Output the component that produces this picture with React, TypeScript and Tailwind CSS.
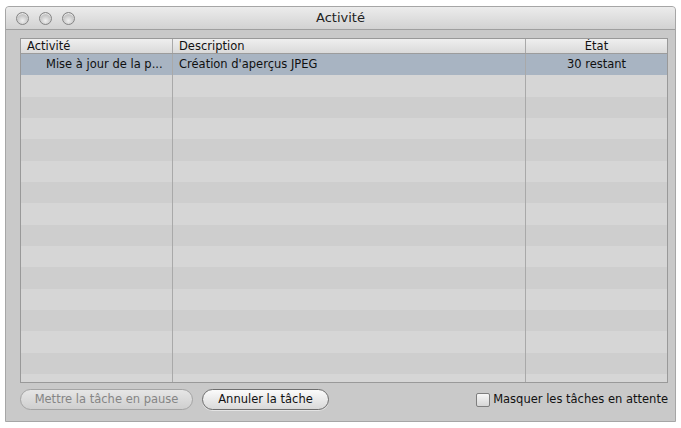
import React from "react";

const font = { fontFamily: '"DejaVu Sans", "Liberation Sans", sans-serif' };

function Light() {
  return (
    <div className="w-[13px] h-[13px] rounded-full border border-[#858585] bg-[radial-gradient(circle_at_50%_70%,#f0f0f0_0%,#c8c8c8_55%,#a2a2a2_100%)] shadow-[inset_0_1px_1px_rgba(255,255,255,0.8)]" />
  );
}

export default function App() {
  const rows = Array.from({ length: 16 }, (_, i) => i);
  return (
    <div className="w-[681px] h-[428px] bg-white pt-[6px] pl-[5px]" style={font}>
      <div className="w-[671px] h-[416px] flex flex-col bg-[#c9c9c9] border border-[#a6a6a6] rounded-t-[4px] overflow-hidden">
        {/* Title bar */}
        <div className="h-[23px] shrink-0 flex items-center relative bg-gradient-to-b from-[#ececec] to-[#d2d2d2] border-b border-[#9f9f9f]">
          <div className="flex gap-[10px] pl-[10px] pt-[1px]">
            <Light />
            <Light />
            <Light />
          </div>
          <div className="absolute inset-0 flex items-center justify-center text-[13px] text-[#222]">
            Activité
          </div>
        </div>
        {/* Content */}
        <div className="flex-1 flex flex-col pl-[14px] pr-[7px] pt-[8px]">
          <div className="h-[345px] border border-[#999] bg-[#d5d5d5] overflow-hidden flex flex-col">
            {/* header */}
            <div className="grid grid-cols-[152px_353px_1fr] h-[15px] shrink-0 bg-gradient-to-b from-[#efefef] to-[#dadada] border-b border-[#9c9c9c] text-[11.5px] leading-[14px] text-[#111]">
              <div className="pl-[6px] border-r border-[#a9a9a9]">Activité</div>
              <div className="pl-[6px] border-r border-[#a9a9a9]">Description</div>
              <div className="text-center">État</div>
            </div>
            {rows.map((i) => {
              const bg = i === 0 ? "bg-[#a8b4c2]" : i % 2 === 1 ? "bg-[#d6d6d6]" : "bg-[#cecece]";
              return (
                <div
                  key={i}
                  className={`grid grid-cols-[152px_353px_1fr] h-[21.33px] shrink-0 text-[11.5px] leading-[21px] text-[#101010] ${bg}`}
                >
                  <div className="pl-[25px] border-r border-[#a9a9a9] whitespace-nowrap overflow-hidden">
                    {i === 0 ? "Mise à jour de la p..." : ""}
                  </div>
                  <div className="pl-[6px] border-r border-[#a9a9a9] whitespace-nowrap">
                    {i === 0 ? "Création d'aperçus JPEG" : ""}
                  </div>
                  <div className="text-center whitespace-nowrap">{i === 0 ? "30 restant" : ""}</div>
                </div>
              );
            })}
          </div>
          {/* Bottom bar */}
          <div className="flex items-center mt-[6px] h-[21px]">
            <button className="h-[21px] w-[173px] rounded-full border border-[#a4a4a4] bg-gradient-to-b from-[#e6e6e6] to-[#cfcfcf] text-[11.5px] text-[#858585] flex items-center justify-center">
              Mettre la tâche en pause
            </button>
            <button className="ml-[9px] h-[21px] w-[127px] rounded-full border border-[#6e6e6e] bg-gradient-to-b from-[#fbfbfb] to-[#d9d9d9] text-[11.5px] text-[#111] flex items-center justify-center shadow-[0_1px_0_rgba(255,255,255,0.5)]">
              Annuler la tâche
            </button>
            <div className="flex-1" />
            <label className="flex items-center gap-[3px] text-[11.5px] text-[#111]">
              <span className="w-[14px] h-[14px] rounded-[2px] border border-[#7e7e7e] bg-gradient-to-b from-[#f7f7f7] to-[#d6d6d6]" />
              Masquer les tâches en attente
            </label>
          </div>
        </div>
      </div>
    </div>
  );
}
